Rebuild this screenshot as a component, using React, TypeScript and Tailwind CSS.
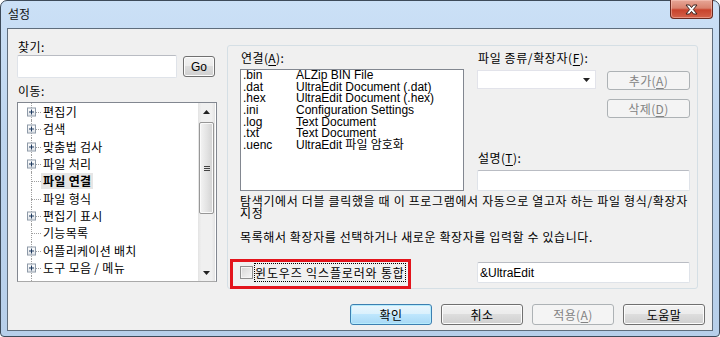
import React from "react";

const ko = "font-['Noto_Sans_CJK_KR','Noto_Sans',sans-serif]";
const lat = "font-['Liberation_Sans','Noto_Sans_CJK_KR',sans-serif]";

type TreeRow = { label: string; plus?: boolean; sel?: boolean; h18?: boolean };

const tree: TreeRow[] = [
    { label: "편집기", plus: true },
    { label: "검색", plus: true, h18: true },
    { label: "맞춤법 검사", plus: true },
    { label: "파일 처리", plus: true },
    { label: "파일 연결", sel: true, h18: true },
    { label: "파일 형식" },
    { label: "편집기 표시", plus: true },
    { label: "기능목록", h18: true },
    { label: "어플리케이션 배치", plus: true },
    { label: "도구 모음 / 메뉴", plus: true },
    { label: "" },
];

const assoc = [
    [".bin", "ALZip BIN File"],
    [".dat", "UltraEdit Document (.dat)"],
    [".hex", "UltraEdit Document (.hex)"],
    [".ini", "Configuration Settings"],
    [".log", "Text Document"],
    [".txt", "Text Document"],
    [".uenc", "UltraEdit 파일 암호화"],
];

function Btn({ children, kind = "normal", className = "" }: { children: React.ReactNode; kind?: "normal" | "default" | "disabled"; className?: string }) {
    const look =
        kind === "default"
            ? "border-[#3c7fb1] bg-[linear-gradient(#eaf6fd,#d9f0fc_50%,#bee6fd_50%,#a7d9f5)] shadow-[inset_0_0_0_1px_#b6ecfd] text-black"
            : kind === "disabled"
                ? "border-[#adb2b5] bg-[#f4f4f4] text-[#838383]"
                : "border-[#707070] bg-[linear-gradient(#f2f2f2,#ebebeb_50%,#dddddd_50%,#cfcfcf)] shadow-[inset_0_0_0_1px_#fcfcfc] text-black";
    return (
        <div className={`flex items-center justify-center rounded-[3px] border text-[12px] leading-[14px] tracking-[0.4px] ${ko} ${look} ${className}`}>
            {children}
        </div>
    );
}

function Arrow({ up = false }: { up?: boolean }) {
    return (
        <svg width="7" height="4" viewBox="0 0 7 4">
            <polygon points={up ? "0,4 7,4 3.5,0" : "0,0 7,0 3.5,4"} fill="#222" />
        </svg>
    );
}

function TextBox({ className = "", children }: { className?: string; children?: React.ReactNode }) {
    return (
        <div className={`rounded-[2px] border border-[#dfe3e9] border-t-[#b9bcc3] bg-white ${className}`}>
            {children}
        </div>
    );
}

export default function App() {
    return (
        <div className="h-[337px] w-[720px] bg-white">
            <div className="flex h-[337px] w-[720px] flex-col rounded-t-[7px] rounded-b-[4px] border border-[#3d4a59] bg-[linear-gradient(#cbe0f6,#bed5ee_40%,#b7cfea)] px-[6px]">
                {/* title bar */}
                <div className="flex h-[27px] items-start justify-between">
                    <div className={`ml-[1px] mt-[6px] text-[12px] leading-[14px] text-[#111] ${ko}`}>설정</div>
                    <div className="-mt-px flex h-[19px] w-[43px] items-center justify-center rounded-b-[4px] border border-t-0 border-[#6b2a20] bg-[linear-gradient(#e7a797,#d9826e_45%,#c8432c_55%,#d4624a)] shadow-[inset_0_0_0_1px_rgba(255,210,200,0.45)]">
                        <svg width="13" height="11" viewBox="0 0 13 11">
                            <polygon points="1,1 4.5,1 6.5,3.6 8.5,1 12,1 8.3,5.5 12,10 8.5,10 6.5,7.4 4.5,10 1,10 4.7,5.5" fill="#fff" stroke="#3a2420" strokeWidth="1" strokeLinejoin="round" />
                        </svg>
                    </div>
                </div>

                {/* client area */}
                <div className="flex h-[303px] w-[706px] flex-col border border-[#5f6d7c] bg-[#f0f0f0]">
                    <div className="flex pl-[9px]">
                        {/* left panel */}
                        <div className="flex w-[200px] flex-col pt-[11px]">
                            <div className={`ml-[1px] text-[12px] leading-[14px] tracking-[0.4px] ${ko}`}>찾기:</div>
                            <div className="mt-[1px] flex items-center">
                                <TextBox className="h-[23px] w-[160px]" />
                                <Btn className="ml-[6px] h-[21px] w-[32px]">
                                    <span className={`${lat} tracking-normal`}>Go</span>
                                </Btn>
                            </div>
                            <div className={`ml-[1px] mt-[6px] text-[12px] leading-[14px] tracking-[0.4px] ${ko}`}>이동:</div>
                            <div className="mt-[4px] flex h-[180px] w-[200px] border border-[#828790] border-b-[#a9a9a9] bg-white">
                                <div className="flex-1 overflow-hidden">
                                    {tree.map((r, i) => (
                                        <div key={i} className={`flex items-center ${r.h18 ? "h-[18px]" : "h-[17px]"}`}>
                                            <div className="relative h-full w-[23px] shrink-0">
                                                <div className="absolute bottom-0 left-[13px] top-0 border-l border-dotted border-[#a0a0a0]" />
                                                {r.label && <div className="absolute left-[13px] top-1/2 w-[10px] border-t border-dotted border-[#a0a0a0]" />}
                                                {r.plus && (
                                                    <div className="absolute left-[9px] top-1/2 flex h-[9px] w-[9px] -translate-y-1/2 items-center justify-center border border-[#8e9aa8] bg-[linear-gradient(#ffffff,#dfe3e8)]">
                                                        <div className="absolute h-px w-[5px] bg-[#1f3a5f]" />
                                                        <div className="absolute h-[5px] w-px bg-[#1f3a5f]" />
                                                    </div>
                                                )}
                                            </div>
                                            {r.label && (
                                                <span className={`whitespace-nowrap px-[2px] text-[12px] leading-[16px] tracking-[0.3px] text-black ${ko} ${r.sel ? "bg-[#e6e6e6] font-bold" : ""}`}>
                                                    {r.label}
                                                </span>
                                            )}
                                        </div>
                                    ))}
                                </div>
                                {/* scrollbar */}
                                <div className="mr-px flex w-[17px] flex-col bg-[linear-gradient(90deg,#e3e3e3,#f0f0f0_20%,#f0f0f0_80%,#e3e3e3)]">
                                    <div className="flex h-[17px] items-center justify-center">
                                        <Arrow up />
                                    </div>
                                    <div className="ml-px mt-[2px] flex h-[92px] w-[15px] flex-col items-center justify-center gap-[1px] rounded-[2px] border border-[#979797] bg-[linear-gradient(90deg,#f4f4f4,#e4e4e4_50%,#d2d2d2)] shadow-[inset_0_0_0_1px_#fafafa]">
                                        <div className="h-px w-[6px] bg-[#444]" />
                                        <div className="h-px w-[6px] bg-[#444]" />
                                        <div className="h-px w-[6px] bg-[#444]" />
                                    </div>
                                    <div className="flex-1" />
                                    <div className="flex h-[17px] items-center justify-center">
                                        <Arrow />
                                    </div>
                                </div>
                            </div>
                        </div>

                        {/* right group box */}
                        <div className="relative ml-[10px] mt-[16px] flex h-[244px] w-[471px] flex-col rounded-[3px] border border-[#d5dfe5] pb-[5px] pt-[5px]">
                            <div className="flex">
                                <div className="ml-[12px] flex w-[224px] flex-col">
                                    <div className={`pl-[1px] text-[12px] leading-[14px] tracking-[0.4px] ${ko}`}>
                                        연결(<u className="underline-offset-2">A</u>):
                                    </div>
                                    <div className={`mt-[4px] h-[122px] w-[224px] border border-[#828790] bg-white pl-[2px] text-[12px] leading-[11.7px] text-black ${lat}`}>
                                        {assoc.map(([ext, desc]) => (
                                            <div key={ext} className="flex h-[11.7px] whitespace-nowrap">
                                                <span className="w-[53px] shrink-0">{ext}</span>
                                                <span>{desc}</span>
                                            </div>
                                        ))}
                                    </div>
                                </div>
                                <div className="ml-[13px] flex w-[213px] flex-col">
                                    <div className={`pl-[1px] text-[12px] leading-[14px] tracking-[0.6px] ${ko}`}>
                                        파일 종류/확장자(<u className="underline-offset-2">F</u>):
                                    </div>
                                    <div className="mt-[5px] flex items-start">
                                        <div className="flex h-[19px] w-[119px] items-center justify-end border border-[#e2e3ea] bg-white pr-[5px]">
                                            <Arrow />
                                        </div>
                                        <div className="ml-[11px] flex w-[83px] flex-col">
                                            <Btn kind="disabled" className="mt-[1px] h-[19px]">
                                                추가(<u className="underline-offset-2">A</u>)
                                            </Btn>
                                            <Btn kind="disabled" className="mt-[9px] h-[19px]">
                                                삭제(<u className="underline-offset-2">D</u>)
                                            </Btn>
                                        </div>
                                    </div>
                                    <div className={`mt-[33px] pl-[1px] text-[12px] leading-[14px] tracking-[0.4px] ${ko}`}>
                                        설명(<u className="underline-offset-2">T</u>):
                                    </div>
                                    <TextBox className="mt-[5px] h-[21px] w-[213px]" />
                                </div>
                            </div>

                            <div className={`ml-[12px] mt-[4px] text-[12px] leading-[12px] tracking-[0.65px] text-black ${ko}`}>
                                <div className="whitespace-nowrap">탐색기에서 더블 클릭했을 때 이 프로그램에서 자동으로 열고자 하는 파일 형식/확장자</div>
                                <div>지정</div>
                            </div>
                            <div className={`ml-[12px] mt-[12px] whitespace-nowrap text-[12px] leading-[12px] tracking-[0.6px] text-black ${ko}`}>
                                목록해서 확장자를 선택하거나 새로운 확장자를 입력할 수 있습니다.
                            </div>

                            <div className="mt-[19px] flex h-[21px] items-center">
                                <div className="ml-[12px] flex w-[224px] items-center">
                                    <div className="h-[13px] w-[13px] shrink-0 border border-[#8e8f8f] bg-[linear-gradient(135deg,#d6d6d6,#f6f6f6)] shadow-[inset_0_0_0_1px_#f4f4f4]" />
                                    <div className={`ml-px h-[19px] whitespace-nowrap border border-dotted border-black text-[12px] leading-[17px] tracking-[0.85px] text-black ${ko}`}>
                                        윈도우즈 익스플로러와 통합
                                    </div>
                                </div>
                                <TextBox className={`ml-[13px] flex h-[21px] w-[213px] items-center pl-[2px] text-[12px] text-black ${lat}`}>
                                    &amp;UltraEdit
                                </TextBox>
                            </div>

                            {/* red highlight annotation */}
                            <div className="absolute left-[2px] top-[213px] h-[30px] w-[181px] border-[3px] border-[#e3141c]" />
                        </div>
                    </div>

                    {/* bottom buttons */}
                    <div className="mt-[15px] flex justify-end gap-[9px] pr-[7px]">
                        <Btn kind="default" className="h-[21px] w-[82px]">확인</Btn>
                        <Btn className="h-[21px] w-[82px]">취소</Btn>
                        <Btn kind="disabled" className="h-[21px] w-[82px]">
                            적용(<u className="underline-offset-2">A</u>)
                        </Btn>
                        <Btn className="h-[21px] w-[82px]">도움말</Btn>
                    </div>
                </div>
            </div>
        </div>
    );
}
